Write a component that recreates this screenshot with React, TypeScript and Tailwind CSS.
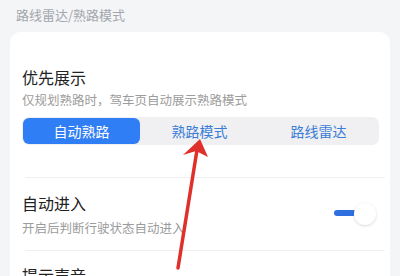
import React from 'react';

const font = { fontFamily: '"Noto Sans CJK SC", "Noto Sans", sans-serif' };

const Row: React.FC<{ title: string; desc?: string; children?: React.ReactNode }> = ({ title, desc, children }) => (
  <div className="flex items-center">
    <div className="flex-1">
      <div className="text-[16px] leading-[24px] text-[#222222]">{title}</div>
      {desc && <div className="mt-1 text-[12.5px] leading-[18px] text-[#9c9c9c]">{desc}</div>}
    </div>
    {children}
  </div>
);

export default function App() {
  const tabs = ['自动熟路', '熟路模式', '路线雷达'];
  return (
    <div className="relative h-[276px] w-[400px] overflow-hidden bg-[#f4f5f7]" style={font}>
      <div className="px-4 pt-[6px] text-[13px] leading-[18px] text-[#a3a6ac]">路线雷达/熟路模式</div>
      <div className="mx-[10px] mt-2 h-[300px] rounded-[10px] bg-white pl-3 pr-[11px] pt-[33px]">
        <div className="text-[16px] leading-[24px] text-[#222222]">优先展示</div>
        <div className="mt-0.5 text-[12.5px] leading-[18px] text-[#9c9c9c]">仅规划熟路时，驾车页自动展示熟路模式</div>
        <div className="mt-2 flex h-[28px] rounded-[7px] bg-[#f0f0f2] p-px">
          {tabs.map((t, i) => (
            <div
              key={t}
              className={
                i === 0
                  ? 'flex w-[117px] items-center justify-center rounded-[6px] bg-[#2f7ef5] text-[14px] text-white'
                  : 'flex flex-1 items-center justify-center text-[14px] text-[#3a7dd6]'
              }
            >
              {t}
            </div>
          ))}
        </div>
        <div className="mt-8 -mr-[6px] ml-[3px] border-t border-[#eeeff1]" />
        <div className="pt-[13px] pb-[13px]">
          <Row title="自动进入" desc="开启后判断行驶状态自动进入">
            <div className="relative mr-[3px] h-[22px] w-[42px]">
              <div className="absolute left-0 top-[7px] h-[6px] w-[22px] rounded-full bg-[#2f6fe0]" />
              <div className="absolute right-0 top-0 h-[22px] w-[22px] rounded-full bg-white shadow-[0_1px_3px_rgba(0,0,0,0.15)]" />
            </div>
          </Row>
        </div>
        <div className="-mr-[6px] ml-[3px] border-t border-[#eeeff1]" />
        <div className="pt-[12px]">
          <Row title="提示声音" />
        </div>
      </div>
      <svg className="pointer-events-none absolute left-0 top-0" width="400" height="276" viewBox="0 0 400 276">
        <line x1="178" y1="268" x2="197" y2="150" stroke="#e0302c" strokeWidth="3.5" strokeLinecap="round" />
        <polygon points="200,139 183,155 196,151 208,157" fill="#e0302c" />
      </svg>
    </div>
  );
}
